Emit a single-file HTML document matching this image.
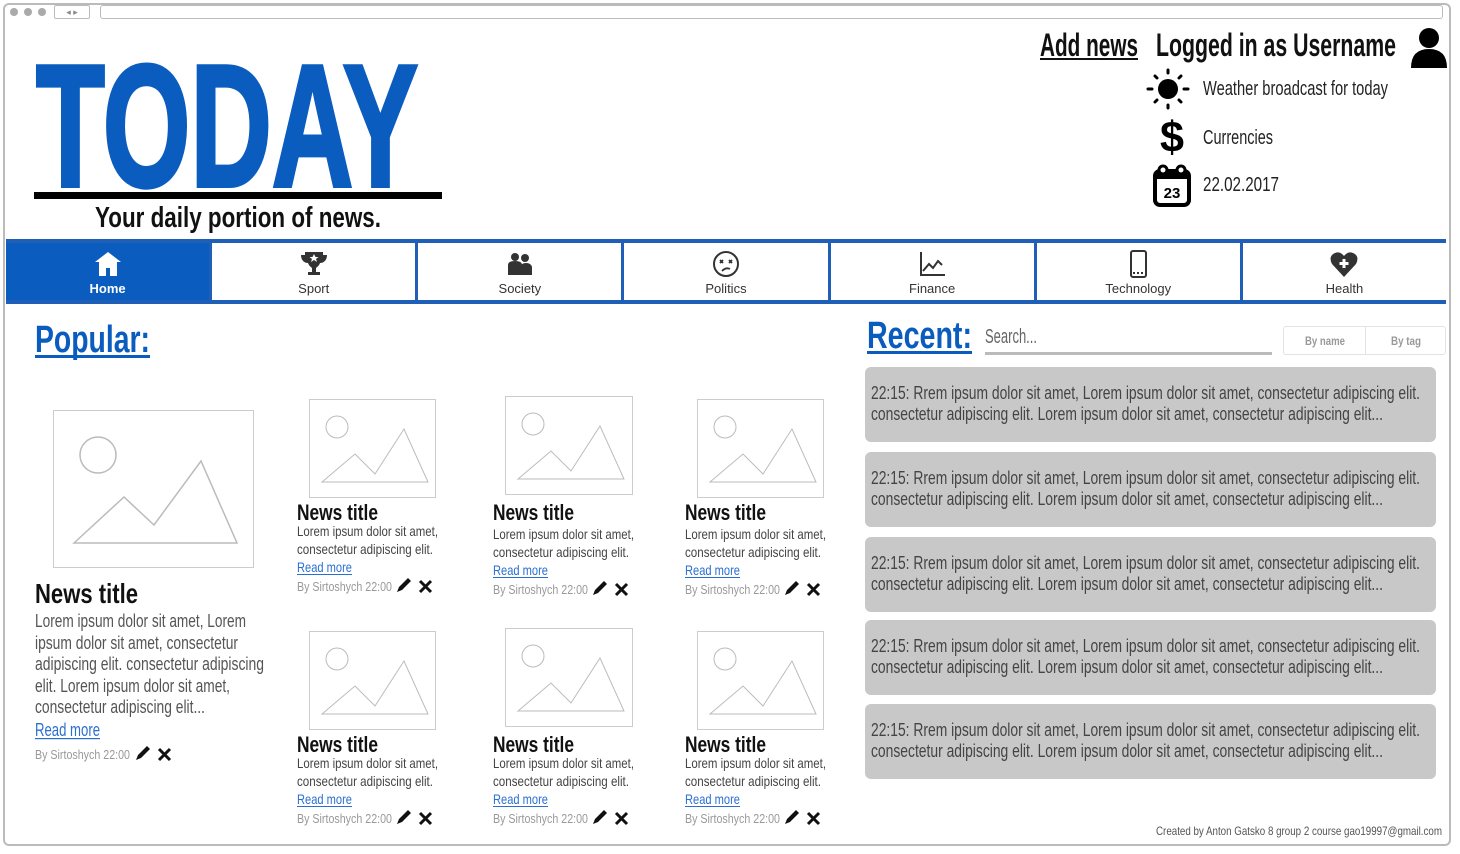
<!DOCTYPE html>
<html><head><meta charset="utf-8"><style>
*{margin:0;padding:0;box-sizing:border-box}
body{width:1460px;height:854px;background:#fff;position:relative;overflow:hidden;font-family:"Liberation Sans",sans-serif;color:#222}
.a{position:absolute}
.frame{left:3px;top:3px;width:1448px;height:843px;border:2px solid #bbb;border-radius:6px}
.dot{width:8px;height:8px;border-radius:50%;background:#aaa;top:8px}
.nav{left:6px;top:239px;width:1440px;height:65px;border-top:4px solid #1f5fb8;border-bottom:4px solid #1f5fb8;display:flex}
.nav div{flex:1;border-right:3px solid #1f5fb8;text-align:center;font-size:13px;color:#333;padding-top:4px}
.nav div:last-child{border-right:none}
.nav div svg{display:block;margin:2px auto 2px;height:30px}
.nav .on{background:#0a5cbf;color:#fff;font-weight:bold}
.img{border:1.5px solid #ccc;background:#fff}
.rc{left:865px;width:571px;height:75px;background:#c8c8c8;border-radius:6px}
svg.over{position:absolute;left:0;top:0}
text{font-family:"Liberation Sans",sans-serif}
</style></head><body>
<div class="a frame"></div>
<div class="a dot" style="left:10px"></div><div class="a dot" style="left:24px"></div><div class="a dot" style="left:38px"></div>
<div class="a" style="left:54px;top:5px;width:36px;height:14px;border:1px solid #bbb;border-radius:2px;font-size:9px;color:#888;text-align:center;line-height:12px">◂ ▸</div>
<div class="a" style="left:100px;top:5px;width:1343px;height:14px;border:1px solid #bbb;border-radius:3px"></div>

<div class="a" style="left:34px;top:192px;width:408px;height:7px;background:#000"></div>

<div class="a nav">
<div class="on"><svg viewBox="0 0 30 30" width="30"><path d="M15 3L2 13h4v14h7v-8h4v8h7V13h4z" fill="#fff"/></svg>Home</div>
<div><svg viewBox="0 0 30 30" width="30"><path d="M6 3h18v3h4c0 5-3 8-7 8-1 3-3 4-4 5v4h4v3H9v-3h4v-4c-1-1-3-2-4-5-4 0-7-3-7-8h4z" fill="#333"/><path d="M15 5l1.5 3h3l-2.5 2 1 3-3-2-3 2 1-3-2.5-2h3z" fill="#fff"/></svg>Sport</div>
<div><svg viewBox="0 0 30 30" width="30"><circle cx="10" cy="8" r="4" fill="#333"/><circle cx="20" cy="9" r="4" fill="#333"/><path d="M3 26V16q0-4 7-4t7 4v10zM16 26V18q0-4 5-4t6 4v8z" fill="#333"/></svg>Society</div>
<div><svg viewBox="0 0 30 30" width="30"><circle cx="15" cy="15" r="12" fill="none" stroke="#333" stroke-width="2"/><path d="M9 11l3 3M12 11l-3 3M18 11l3 3M21 11l-3 3M11 22q4-4 8-2" stroke="#333" stroke-width="1.8" fill="none"/></svg>Politics</div>
<div><svg viewBox="0 0 30 30" width="30"><path d="M4 3v23h24M6 22l6-7 4 4 5-7 4 4" stroke="#333" stroke-width="2" fill="none"/></svg>Finance</div>
<div><svg viewBox="0 0 30 30" width="30"><rect x="8" y="2" width="15" height="26" rx="2" fill="none" stroke="#333" stroke-width="2"/><path d="M10 24h11" stroke="#333" stroke-width="2" stroke-dasharray="2 2"/></svg>Technology</div>
<div><svg viewBox="0 0 30 30" width="30"><path d="M15 28L3 15Q-1 7 6 4q5-2 9 3 4-5 9-3 7 3 3 11z" fill="#333"/><path d="M15 10v9M10.5 14.5h9" stroke="#fff" stroke-width="3"/></svg>Health</div>
</div>

<div class="a" style="left:985px;top:352px;width:287px;height:3px;background:#bbb"></div>
<div class="a" style="left:1283px;top:326px;width:163px;height:29px;border:1px solid #e3e3e3;border-radius:3px"><div style="position:absolute;left:81px;top:0;width:1px;height:27px;background:#e3e3e3"></div></div>

<div class="a img" style="left:53px;top:410px;width:201px;height:158px"><svg width="198" height="155" viewBox="0 0 198 155"><circle cx="44" cy="44" r="18" fill="none" stroke="#bbb" stroke-width="1.5"/><path d="M20 132l50-46 30 28 47-64 36 82z" fill="none" stroke="#bbb" stroke-width="1.5"/></svg></div>
<div class="a img" style="left:309px;top:399px;width:127px;height:99px"><svg width="124" height="96"><circle cx="27" cy="27" r="11" fill="none" stroke="#bbb"/><path d="M12 82l33-28 20 20 29-45 24 53z" fill="none" stroke="#bbb"/></svg></div>
<div class="a img" style="left:505px;top:396px;width:128px;height:99px"><svg width="124" height="96"><circle cx="27" cy="27" r="11" fill="none" stroke="#bbb"/><path d="M12 82l33-28 20 20 29-45 24 53z" fill="none" stroke="#bbb"/></svg></div>
<div class="a img" style="left:697px;top:399px;width:127px;height:99px"><svg width="124" height="96"><circle cx="27" cy="27" r="11" fill="none" stroke="#bbb"/><path d="M12 82l33-28 20 20 29-45 24 53z" fill="none" stroke="#bbb"/></svg></div>
<div class="a img" style="left:309px;top:631px;width:127px;height:99px"><svg width="124" height="96"><circle cx="27" cy="27" r="11" fill="none" stroke="#bbb"/><path d="M12 82l33-28 20 20 29-45 24 53z" fill="none" stroke="#bbb"/></svg></div>
<div class="a img" style="left:505px;top:628px;width:128px;height:99px"><svg width="124" height="96"><circle cx="27" cy="27" r="11" fill="none" stroke="#bbb"/><path d="M12 82l33-28 20 20 29-45 24 53z" fill="none" stroke="#bbb"/></svg></div>
<div class="a img" style="left:697px;top:631px;width:127px;height:99px"><svg width="124" height="96"><circle cx="27" cy="27" r="11" fill="none" stroke="#bbb"/><path d="M12 82l33-28 20 20 29-45 24 53z" fill="none" stroke="#bbb"/></svg></div>

<div class="a rc" style="top:367px"></div>
<div class="a rc" style="top:452px"></div>
<div class="a rc" style="top:537px"></div>
<div class="a rc" style="top:620px"></div>
<div class="a rc" style="top:704px"></div>

<svg class="over" width="1460" height="854" viewBox="0 0 1460 854">
<defs>
<g id="pe"><path d="M0 13l2-5 9-9 3 3-9 9z" fill="#111"/></g>
<g id="xx"><path d="M1 1l11 11M12 1L1 12" stroke="#111" stroke-width="3"/></g>
</defs>
<text x="36" y="186" font-size="174" font-weight="bold" fill="#0a5cbf" stroke="#0a5cbf" stroke-width="4" textLength="382" lengthAdjust="spacingAndGlyphs">TODAY</text>
<text x="95" y="227" font-size="29" font-weight="bold" fill="#111" textLength="286" lengthAdjust="spacingAndGlyphs">Your daily portion of news.</text>

<text x="1040" y="56" font-size="32" font-weight="bold" fill="#111" textLength="98" lengthAdjust="spacingAndGlyphs">Add news</text>
<rect x="1040" y="58" width="98" height="2" fill="#111"/>
<text x="1156" y="56" font-size="32" font-weight="bold" fill="#111" textLength="240" lengthAdjust="spacingAndGlyphs">Logged in as Username</text>
<circle cx="1429" cy="38" r="10"/><path d="M1411 68Q1411 49 1429 49Q1447 49 1447 68Z"/>
<g transform="translate(1147 68)"><circle cx="21" cy="21" r="10"/><g stroke="#000" stroke-width="3" stroke-linecap="round"><path d="M21 2v3M21 37v3M1 21h4M37 21h4M8 8l2 2M32 32l2 2M8 34l2-2M32 10l2-2"/></g></g>
<text x="1203" y="95" font-size="20" fill="#222" textLength="185" lengthAdjust="spacingAndGlyphs">Weather broadcast for today</text>
<text x="1160" y="152" font-size="44" font-weight="bold" fill="#000" textLength="24" lengthAdjust="spacingAndGlyphs">$</text>
<text x="1203" y="144" font-size="20" fill="#222" textLength="70" lengthAdjust="spacingAndGlyphs">Currencies</text>
<g transform="translate(1153 165)"><rect x="2" y="6" width="34" height="34" rx="5" fill="none" stroke="#000" stroke-width="4"/><rect x="2" y="6" width="34" height="8" fill="#000"/><circle cx="10" cy="5" r="4" fill="#fff" stroke="#000" stroke-width="3"/><circle cx="28" cy="5" r="4" fill="#fff" stroke="#000" stroke-width="3"/><text x="19" y="33" text-anchor="middle" font-weight="bold" font-size="15">23</text></g>
<text x="1203" y="191" font-size="20" fill="#222" textLength="76" lengthAdjust="spacingAndGlyphs">22.02.2017</text>

<text x="35" y="352" font-size="38" font-weight="bold" fill="#0a5cbf" textLength="115" lengthAdjust="spacingAndGlyphs">Popular:</text>
<rect x="35" y="355" width="115" height="3" fill="#0a5cbf"/>
<text x="867" y="348" font-size="38" font-weight="bold" fill="#0a5cbf" textLength="105" lengthAdjust="spacingAndGlyphs">Recent:</text>
<rect x="867" y="351" width="105" height="3" fill="#0a5cbf"/>
<text x="985" y="343" font-size="20" fill="#666" textLength="52" lengthAdjust="spacingAndGlyphs">Search...</text>
<text x="1305" y="345" font-size="12" font-weight="bold" fill="#999" textLength="40" lengthAdjust="spacingAndGlyphs">By name</text>
<text x="1391" y="345" font-size="12" font-weight="bold" fill="#999" textLength="30" lengthAdjust="spacingAndGlyphs">By tag</text>

<g font-size="18" fill="#444">
<text x="871" y="399" textLength="549" lengthAdjust="spacingAndGlyphs">22:15: Rrem ipsum dolor sit amet, Lorem ipsum dolor sit amet, consectetur adipiscing elit.</text>
<text x="871" y="420" textLength="512" lengthAdjust="spacingAndGlyphs">consectetur adipiscing elit. Lorem ipsum dolor sit amet, consectetur adipiscing elit...</text>
<text x="871" y="484" textLength="549" lengthAdjust="spacingAndGlyphs">22:15: Rrem ipsum dolor sit amet, Lorem ipsum dolor sit amet, consectetur adipiscing elit.</text>
<text x="871" y="505" textLength="512" lengthAdjust="spacingAndGlyphs">consectetur adipiscing elit. Lorem ipsum dolor sit amet, consectetur adipiscing elit...</text>
<text x="871" y="569" textLength="549" lengthAdjust="spacingAndGlyphs">22:15: Rrem ipsum dolor sit amet, Lorem ipsum dolor sit amet, consectetur adipiscing elit.</text>
<text x="871" y="590" textLength="512" lengthAdjust="spacingAndGlyphs">consectetur adipiscing elit. Lorem ipsum dolor sit amet, consectetur adipiscing elit...</text>
<text x="871" y="652" textLength="549" lengthAdjust="spacingAndGlyphs">22:15: Rrem ipsum dolor sit amet, Lorem ipsum dolor sit amet, consectetur adipiscing elit.</text>
<text x="871" y="673" textLength="512" lengthAdjust="spacingAndGlyphs">consectetur adipiscing elit. Lorem ipsum dolor sit amet, consectetur adipiscing elit...</text>
<text x="871" y="736" textLength="549" lengthAdjust="spacingAndGlyphs">22:15: Rrem ipsum dolor sit amet, Lorem ipsum dolor sit amet, consectetur adipiscing elit.</text>
<text x="871" y="757" textLength="512" lengthAdjust="spacingAndGlyphs">consectetur adipiscing elit. Lorem ipsum dolor sit amet, consectetur adipiscing elit...</text>
</g>

<text x="35" y="603" font-size="28" font-weight="bold" fill="#111" textLength="103" lengthAdjust="spacingAndGlyphs">News title</text>
<g font-size="18" fill="#555">
<text x="35" y="627" textLength="211" lengthAdjust="spacingAndGlyphs">Lorem ipsum dolor sit amet, Lorem</text>
<text x="35" y="649" textLength="203" lengthAdjust="spacingAndGlyphs">ipsum dolor sit amet, consectetur</text>
<text x="35" y="670" textLength="229" lengthAdjust="spacingAndGlyphs">adipiscing elit. consectetur adipiscing</text>
<text x="35" y="692" textLength="195" lengthAdjust="spacingAndGlyphs">elit. Lorem ipsum dolor sit amet,</text>
<text x="35" y="713" textLength="170" lengthAdjust="spacingAndGlyphs">consectetur adipiscing elit...</text>
</g>
<text x="35" y="736" font-size="18" fill="#2a6fd0" textLength="65" lengthAdjust="spacingAndGlyphs">Read more</text>
<rect x="35" y="738" width="65" height="1.2" fill="#2a6fd0"/>
<text x="35" y="759" font-size="13" fill="#999" textLength="95" lengthAdjust="spacingAndGlyphs">By Sirtoshych 22:00</text>
<use href="#pe" x="136" y="747"/><use href="#xx" x="158" y="748"/>

<g id="c1">
<text x="297" y="520" font-size="22" font-weight="bold" fill="#111" textLength="81" lengthAdjust="spacingAndGlyphs">News title</text>
<text x="297" y="536" font-size="14" fill="#444" textLength="141" lengthAdjust="spacingAndGlyphs">Lorem ipsum dolor sit amet,</text>
<text x="297" y="554" font-size="14" fill="#444" textLength="136" lengthAdjust="spacingAndGlyphs">consectetur adipiscing elit.</text>
<text x="297" y="572" font-size="14" fill="#2a6fd0" textLength="55" lengthAdjust="spacingAndGlyphs">Read more</text>
<rect x="297" y="574" width="55" height="1" fill="#2a6fd0"/>
<text x="297" y="591" font-size="13" fill="#999" textLength="95" lengthAdjust="spacingAndGlyphs">By Sirtoshych 22:00</text>
<use href="#pe" x="397" y="579"/><use href="#xx" x="419" y="580"/>
</g>
<g transform="translate(196 3)">
<text x="297" y="517" font-size="22" font-weight="bold" fill="#111" textLength="81" lengthAdjust="spacingAndGlyphs">News title</text>
<text x="297" y="536" font-size="14" fill="#444" textLength="141" lengthAdjust="spacingAndGlyphs">Lorem ipsum dolor sit amet,</text>
<text x="297" y="554" font-size="14" fill="#444" textLength="136" lengthAdjust="spacingAndGlyphs">consectetur adipiscing elit.</text>
<text x="297" y="572" font-size="14" fill="#2a6fd0" textLength="55" lengthAdjust="spacingAndGlyphs">Read more</text>
<rect x="297" y="574" width="55" height="1" fill="#2a6fd0"/>
<text x="297" y="591" font-size="13" fill="#999" textLength="95" lengthAdjust="spacingAndGlyphs">By Sirtoshych 22:00</text>
<use href="#pe" x="397" y="579"/><use href="#xx" x="419" y="580"/>
</g>
<g transform="translate(388 3)">
<text x="297" y="517" font-size="22" font-weight="bold" fill="#111" textLength="81" lengthAdjust="spacingAndGlyphs">News title</text>
<text x="297" y="536" font-size="14" fill="#444" textLength="141" lengthAdjust="spacingAndGlyphs">Lorem ipsum dolor sit amet,</text>
<text x="297" y="554" font-size="14" fill="#444" textLength="136" lengthAdjust="spacingAndGlyphs">consectetur adipiscing elit.</text>
<text x="297" y="572" font-size="14" fill="#2a6fd0" textLength="55" lengthAdjust="spacingAndGlyphs">Read more</text>
<rect x="297" y="574" width="55" height="1" fill="#2a6fd0"/>
<text x="297" y="591" font-size="13" fill="#999" textLength="95" lengthAdjust="spacingAndGlyphs">By Sirtoshych 22:00</text>
<use href="#pe" x="397" y="579"/><use href="#xx" x="419" y="580"/>
</g>
<g transform="translate(0 232)"><use href="#c1"/></g>
<g transform="translate(196 232)"><use href="#c1"/></g>
<g transform="translate(388 232)"><use href="#c1"/></g>

<text x="1156" y="835" font-size="12" fill="#555" textLength="286" lengthAdjust="spacingAndGlyphs">Created by Anton Gatsko 8 group 2 course gao19997@gmail.com</text>
</svg>
</body></html>
